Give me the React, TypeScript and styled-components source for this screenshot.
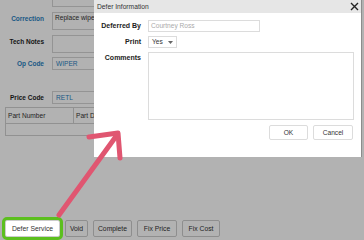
import React from "react";
import styled, { createGlobalStyle } from "styled-components";

const FONT = `"Liberation Sans", Arial, sans-serif`;

const Global = createGlobalStyle`
  html, body { margin: 0; padding: 0; }
  body { width: 364px; height: 240px; overflow: hidden; background: #fff; font-family: ${FONT}; }
`;

const Page = styled.div`
  position: relative;
  width: 364px;
  height: 240px;
  overflow: hidden;
  background: #ffffff;
`;

const Form = styled.div`
  display: grid;
  grid-template-columns: 44px 1fr;
  column-gap: 8px;
  align-items: start;
  margin-top: -11px;
  padding-right: 10px;
`;

const Label = styled.div<{ $blue?: boolean; $mt?: number }>`
  text-align: right;
  font-size: 6.5px;
  line-height: 13px;
  font-weight: bold;
  color: ${(p) => (p.$blue ? "#2a7fc0" : "#1e1e1e")};
  white-space: nowrap;
  margin-top: ${(p) => p.$mt ?? 0}px;
`;

const Field = styled.div<{ $h: number; $mt: number; $blue?: boolean }>`
  height: ${(p) => p.$h}px;
  margin-top: ${(p) => p.$mt}px;
  border: 1px solid #d4d4d4;
  box-sizing: border-box;
  background: #fff;
  font-size: 6.6px;
  line-height: 9px;
  padding: 0 2px;
  color: ${(p) => (p.$blue ? "#2a7fc0" : "#333")};
  white-space: nowrap;
  overflow: hidden;
`;

const FieldShort = styled(Field)`
  line-height: 11px;
  padding: 0 3px;
`;

const Table = styled.div`
  margin: 3px 0 0 5px;
  width: 120px;
  border: 1px solid #d0d0d0;
  box-sizing: border-box;
  height: 29px;
`;

const THead = styled.div`
  display: grid;
  grid-template-columns: 67px 1fr;
  height: 16px;
  border-bottom: 1px solid #d0d0d0;
  box-sizing: border-box;
`;

const Th = styled.div`
  font-size: 6.6px;
  line-height: 15px;
  padding-left: 2px;
  color: #333;
  white-space: nowrap;
  overflow: hidden;
  & + & { border-left: 1px solid #d0d0d0; }
`;

const Actions = styled.div`
  position: absolute;
  left: 5px;
  bottom: 3px;
  display: flex;
  gap: 5px;
`;

const Btn = styled.button<{ $hl?: boolean; $w: number }>`
  width: ${(p) => p.$w}px;
  height: 17px;
  padding: 0;
  border: 1px solid #cccccc;
  border-radius: 2px;
  background: #fff;
  font-family: ${FONT};
  font-size: 6.8px;
  color: #333;
  text-align: center;
  white-space: nowrap;
  outline: ${(p) => (p.$hl ? "3px solid #5cbf1e" : "none")};
  position: relative;
  z-index: ${(p) => (p.$hl ? 3 : 0)};
`;

const Overlay = styled.div`
  position: absolute;
  inset: 0;
  background: rgba(0, 0, 0, 0.3);
  z-index: 1;
`;

const Dialog = styled.div`
  position: absolute;
  left: 94px;
  top: 0;
  width: 267px;
  height: 157px;
  background: #fff;
  z-index: 2;
  display: flex;
  flex-direction: column;
  box-shadow: 1px 0 0 #8c8c8c;
`;

const TitleBar = styled.div`
  height: 13px;
  background: #e6e6e6;
  display: flex;
  align-items: center;
  justify-content: space-between;
  padding: 0 2px 0 3px;
`;

const Title = styled.div`
  font-size: 6.7px;
  color: #333;
`;

const Body = styled.div`
  display: grid;
  grid-template-columns: 47px 1fr;
  column-gap: 7px;
  row-gap: 4px;
  padding: 7px 7px 0 0;
  align-items: start;
`;

const DLabel = styled.div`
  text-align: right;
  font-size: 7px;
  font-weight: bold;
  line-height: 12px;
  color: #222;
  white-space: nowrap;
`;

const Input = styled.div`
  width: 112px;
  height: 12px;
  border: 1px solid #dcdcdc;
  box-sizing: border-box;
  font-size: 6.6px;
  line-height: 10px;
  padding-left: 2px;
  color: #aaa;
`;

const Select = styled.div`
  width: 29px;
  height: 12px;
  border: 1px solid #dcdcdc;
  box-sizing: border-box;
  font-size: 6.6px;
  line-height: 10px;
  padding-left: 3px;
  color: #333;
  display: flex;
  align-items: center;
  gap: 5px;
`;

const Caret = styled.svg`
  flex: none;
`;

const TextArea = styled.div`
  width: 206px;
  height: 68px;
  border: 1px solid #dcdcdc;
  box-sizing: border-box;
`;

const Footer = styled.div`
  display: flex;
  justify-content: flex-end;
  gap: 5px;
  padding: 5px 8px 0 0;
`;

const DBtn = styled.div<{ $w: number }>`
  width: ${(p) => p.$w}px;
  height: 15px;
  border: 1px solid #dcdcdc;
  border-radius: 2px;
  box-sizing: border-box;
  font-size: 6.6px;
  line-height: 13px;
  text-align: center;
  color: #333;
`;

const ArrowSvg = styled.svg`
  position: absolute;
  left: 0;
  top: 0;
  z-index: 4;
  pointer-events: none;
`;

export default function App() {
  return (
    <Page>
      <Global />
      <Form>
        <Label />
        <Field $h={18} $mt={0} />
        <Label $blue $mt={5}>Correction</Label>
        <Field $h={18} $mt={5}>Replace wiper</Field>
        <Label $mt={5}>Tech Notes</Label>
        <Field $h={18} $mt={5} />
        <Label $blue $mt={4}>Op Code</Label>
        <FieldShort $h={13} $mt={4} $blue>WIPER</FieldShort>
        <Label $mt={21}>Price Code</Label>
        <FieldShort $h={13} $mt={21} $blue>RETL</FieldShort>
      </Form>
      <Table>
        <THead>
          <Th>Part Number</Th>
          <Th>Part Description</Th>
        </THead>
      </Table>
      <Actions>
        <Btn $hl $w={55}>Defer Service</Btn>
        <Btn $w={23}>Void</Btn>
        <Btn $w={39}>Complete</Btn>
        <Btn $w={40}>Fix Price</Btn>
        <Btn $w={38}>Fix Cost</Btn>
      </Actions>
      <Overlay />
      <Dialog>
        <TitleBar>
          <Title>Defer Information</Title>
          <svg width="9" height="9" viewBox="0 0 9 9">
            <path d="M1 1 L8 8 M8 1 L1 8" stroke="#222" strokeWidth="1.4" />
          </svg>
        </TitleBar>
        <Body>
          <DLabel>Deferred By</DLabel>
          <Input>Courtney Ross</Input>
          <DLabel>Print</DLabel>
          <Select>
            Yes
            <Caret width="5" height="3" viewBox="0 0 5 3">
              <path d="M0 0 L5 0 L2.5 3 Z" fill="#666" />
            </Caret>
          </Select>
          <DLabel>Comments</DLabel>
          <TextArea />
        </Body>
        <Footer>
          <DBtn $w={39}>OK</DBtn>
          <DBtn $w={40}>Cancel</DBtn>
        </Footer>
      </Dialog>
      <ArrowSvg width="364" height="240" viewBox="0 0 364 240">
        <g stroke="#e05671" strokeWidth="5" strokeLinecap="round" strokeLinejoin="round" fill="none">
          <path d="M59 215 L117 135" />
          <path d="M89 137 L118 133 L120 158" />
        </g>
      </ArrowSvg>
    </Page>
  );
}
